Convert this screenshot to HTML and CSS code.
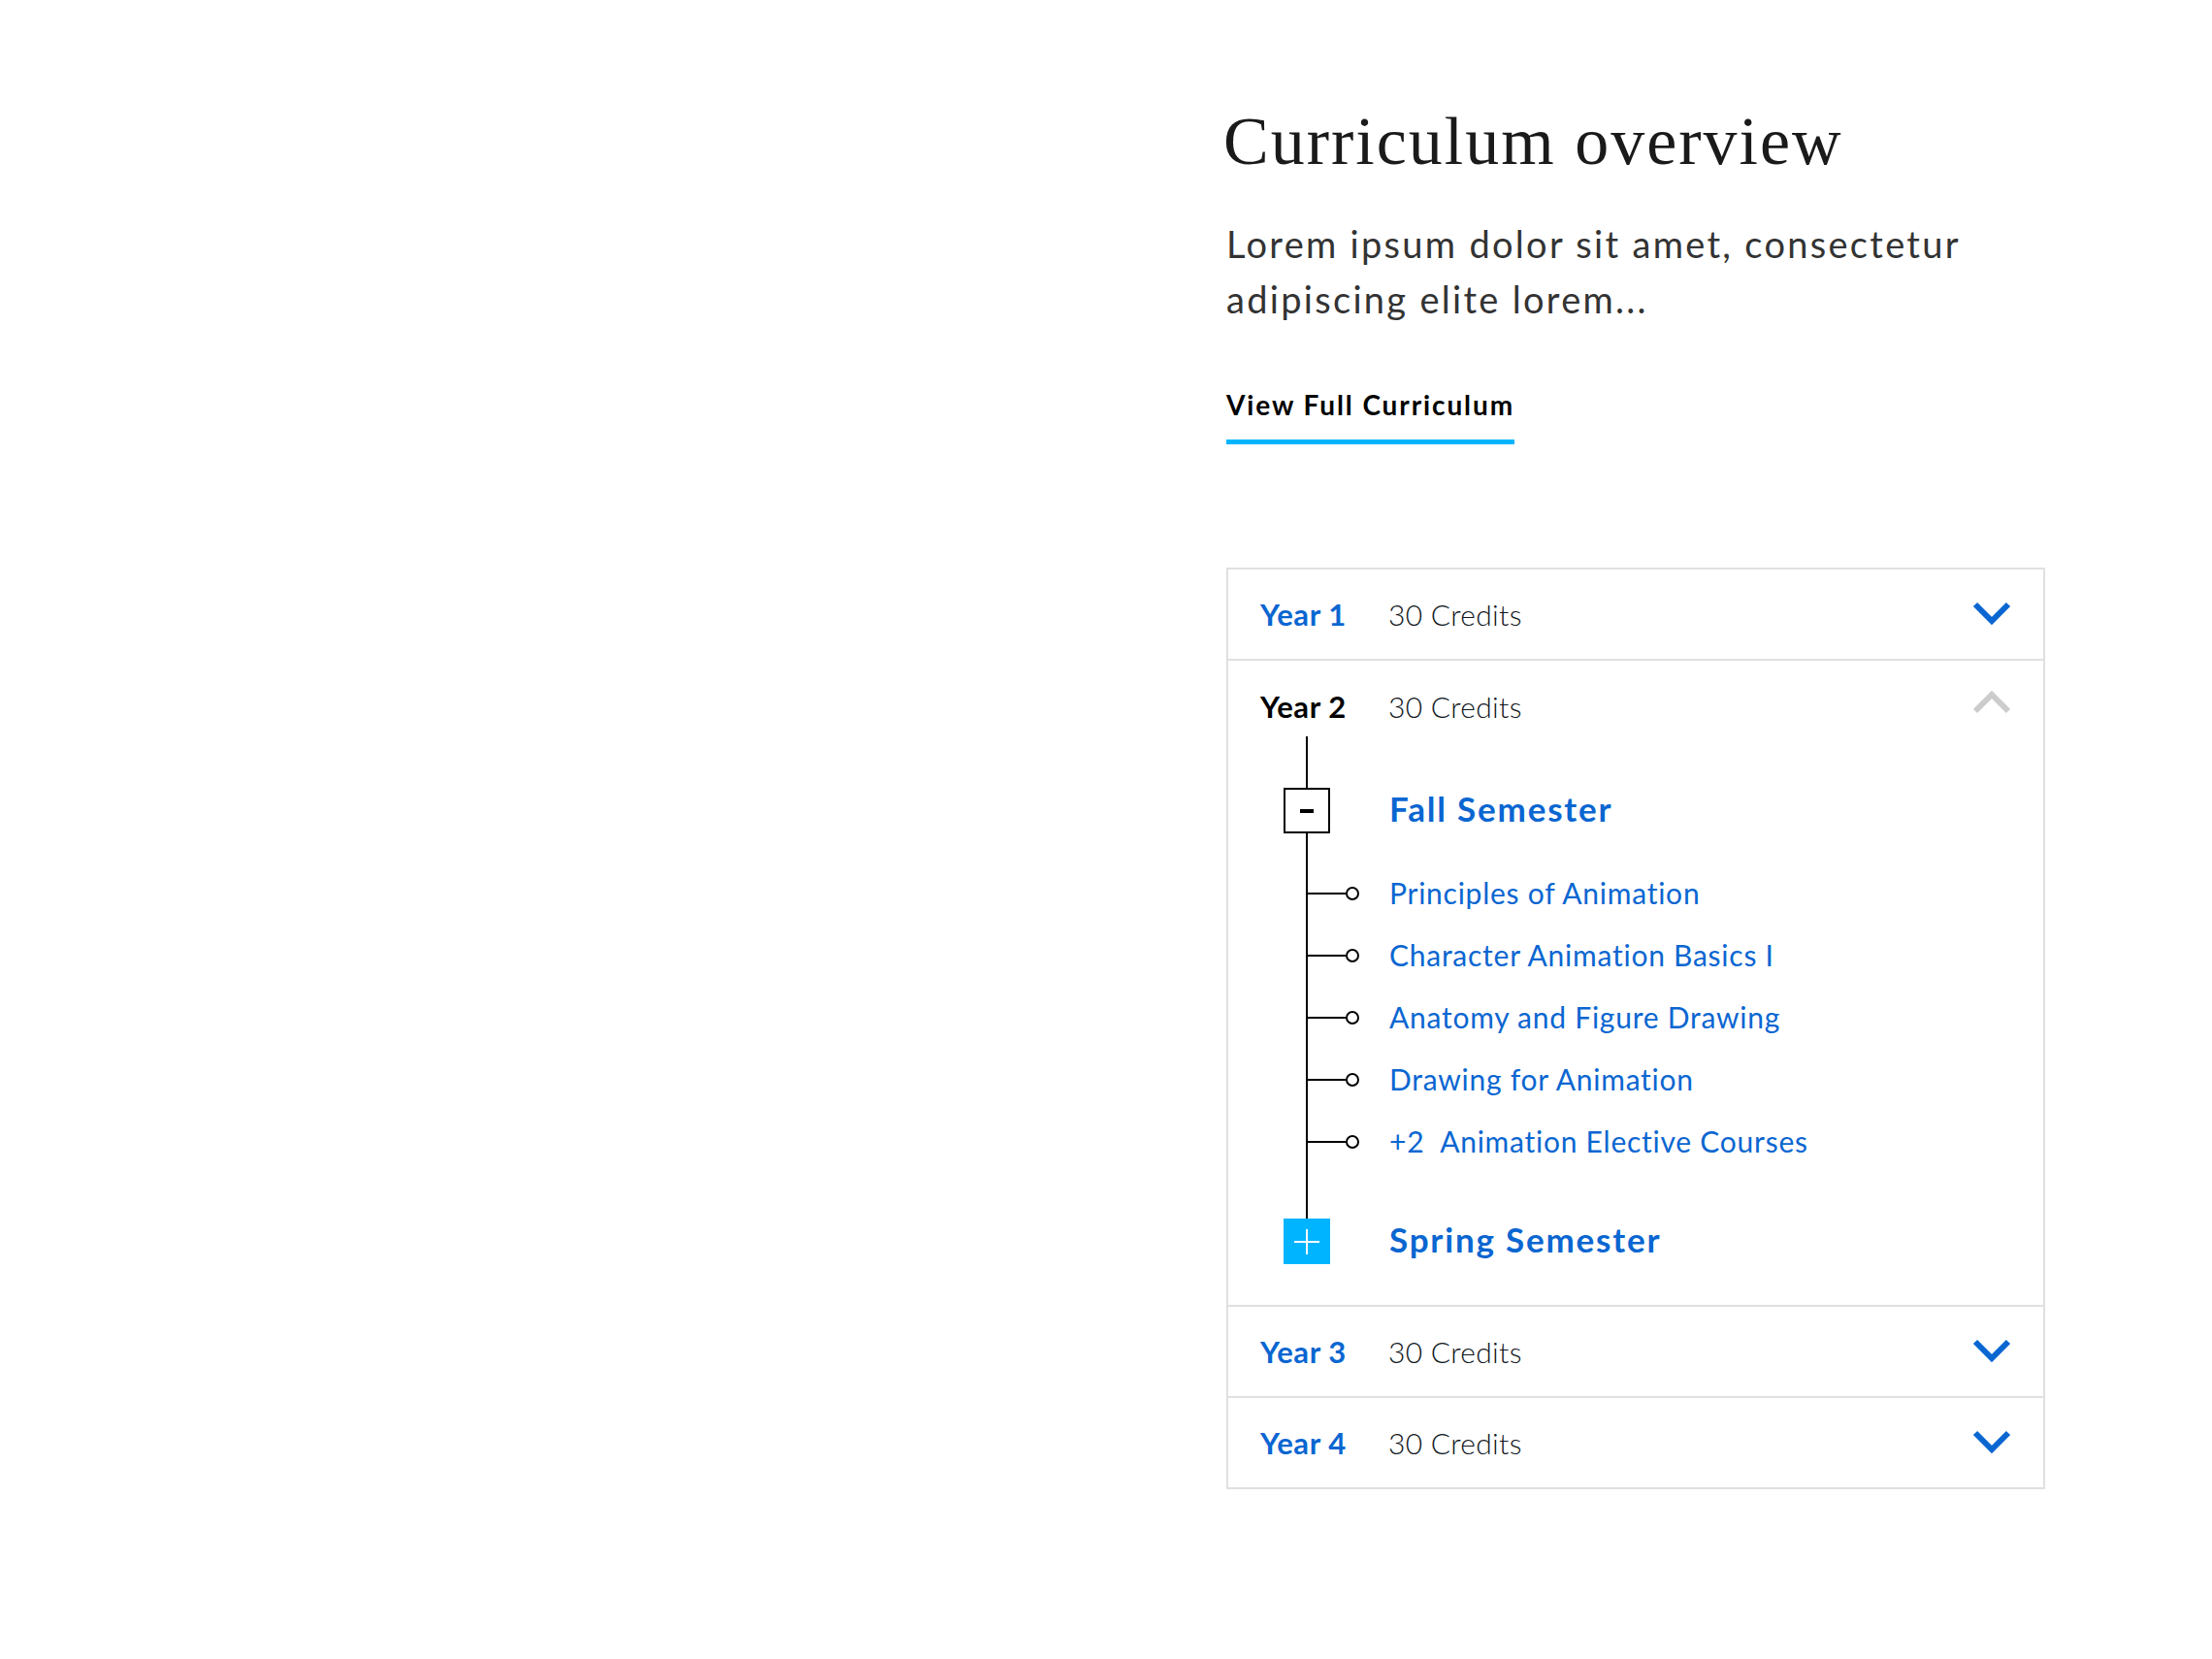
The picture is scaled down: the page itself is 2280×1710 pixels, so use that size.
FILE: index.html
```html
<!DOCTYPE html>
<html lang="en">
<head>
<meta charset="utf-8">
<title>Curriculum overview</title>
<link rel="stylesheet" href="styles.css">
</head>
<body>
<main class="overview">
  <h1 class="title">Curriculum overview</h1>
  <p class="intro">Lorem ipsum dolor sit amet, consectetur adipiscing elite lorem...</p>
  <a class="cta" href="#">View Full Curriculum</a>

  <div class="accordion">
    <div class="year">
      <div class="year-head">
        <span class="year-label">Year 1</span>
        <span class="credits">30 Credits</span>
        <svg class="chev" viewBox="0 0 40 26" width="40" height="26"><polyline points="3,3 20,20 37,3" /></svg>
      </div>
    </div>

    <div class="year open">
      <div class="year-head">
        <span class="year-label">Year 2</span>
        <span class="credits">30 Credits</span>
        <svg class="chev up" viewBox="0 0 40 26" width="40" height="26"><polyline points="3,23 20,6 37,23" /></svg>
      </div>
      <div class="tree">
        <div class="semester">
          <span class="toggle minus"><svg viewBox="0 0 14 4" width="14" height="4"><rect x="0" y="0" width="14" height="4" /></svg></span>
          <span class="sem-name">Fall Semester</span>
        </div>
        <ul class="courses">
          <li class="course"><span class="branch"><span class="stem"></span><span class="dot"></span></span><span class="course-name">Principles of Animation</span></li>
          <li class="course"><span class="branch"><span class="stem"></span><span class="dot"></span></span><span class="course-name">Character Animation Basics I</span></li>
          <li class="course"><span class="branch"><span class="stem"></span><span class="dot"></span></span><span class="course-name">Anatomy and Figure Drawing</span></li>
          <li class="course"><span class="branch"><span class="stem"></span><span class="dot"></span></span><span class="course-name">Drawing for Animation</span></li>
          <li class="course"><span class="branch"><span class="stem"></span><span class="dot"></span></span><span class="course-name">+2&nbsp; Animation Elective Courses</span></li>
        </ul>
        <div class="semester spring">
          <span class="toggle plus"><svg viewBox="0 0 26 26" width="26" height="26"><rect x="0" y="12" width="26" height="2" /><rect x="12" y="0" width="2" height="26" /></svg></span>
          <span class="sem-name">Spring Semester</span>
        </div>
      </div>
    </div>

    <div class="year">
      <div class="year-head">
        <span class="year-label">Year 3</span>
        <span class="credits">30 Credits</span>
        <svg class="chev" viewBox="0 0 40 26" width="40" height="26"><polyline points="3,3 20,20 37,3" /></svg>
      </div>
    </div>

    <div class="year">
      <div class="year-head">
        <span class="year-label">Year 4</span>
        <span class="credits">30 Credits</span>
        <svg class="chev" viewBox="0 0 40 26" width="40" height="26"><polyline points="3,3 20,20 37,3" /></svg>
      </div>
    </div>
  </div>
</main>
</body>
</html>
```

FILE: styles.css
```css
* { box-sizing: border-box; }

html, body {
  margin: 0;
  padding: 0;
  background: #ffffff;
}

body {
  font-family: Lato, "Open Sans", "Liberation Sans", sans-serif;
  color: #333333;
}

.overview {
  width: 844px;
  margin-left: 1264px;
  padding-top: 111px;
  padding-bottom: 120px;
}

.title {
  margin: 0 0 0 -3px;
  font-family: "Liberation Serif", "Times New Roman", serif;
  font-weight: 400;
  font-size: 70px;
  line-height: 70px;
  letter-spacing: 2px;
  color: #1a1a1a;
}

.intro {
  margin: 42px 0 0 0;
  font-size: 38px;
  line-height: 57px;
  letter-spacing: 2.3px;
  color: #333333;
  max-width: 820px;
}

.cta {
  display: inline-block;
  margin-top: 66px;
  font-size: 28px;
  line-height: 28px;
  font-weight: 700;
  color: #000000;
  text-decoration: none;
  padding-bottom: 22px;
  border-bottom: 5px solid #00b4ff;
  letter-spacing: 1.9px;
}

.accordion {
  margin-top: 127px;
  border: 2px solid #e0e0e0;
}

.year + .year {
  border-top: 2px solid #e0e0e0;
}

.year-head {
  display: flex;
  align-items: center;
  height: 92px;
  padding: 0 33px 0 33px;
}

.year-label {
  width: 132px;
  font-size: 31px;
  font-weight: 700;
  letter-spacing: 0.6px;
  color: #0a66d1;
}

.open .year-head {
  height: 80px;
  padding-top: 14px;
}

.open .year-label {
  color: #000000;
}

.credits {
  flex: 1;
  font-size: 30px;
  font-weight: 300;
  letter-spacing: 0.3px;
  color: #111722;
}

.chev {
  display: block;
  width: 40px;
  height: 26px;
}

.chev polyline {
  fill: none;
  stroke: #0a66d1;
  stroke-width: 6;
  stroke-linejoin: miter;
  stroke-linecap: butt;
}

.chev.up polyline {
  stroke: #cccccc;
}

.open .chev.up {
  margin-top: -10px;
}

.tree {
  position: relative;
  margin: 0 33px;
  padding-top: 51px;
  padding-bottom: 42px;
}

.tree::before {
  content: "";
  position: absolute;
  left: 47px;
  top: -2px;
  bottom: 89px;
  width: 2px;
  background: #000000;
}

.semester {
  position: relative;
  display: flex;
  align-items: center;
  height: 47px;
}

.toggle {
  display: flex;
  align-items: center;
  justify-content: center;
  width: 48px;
  height: 47px;
  margin-left: 24px;
  margin-right: 61px;
}

.toggle.minus {
  border: 2px solid #000000;
  background: #ffffff;
}

.toggle.minus rect { fill: #000000; }

.toggle.plus {
  background: #00b4ff;
}

.toggle.plus rect { fill: #ffffff; }

.sem-name {
  font-size: 35px;
  font-weight: 700;
  color: #0a66d1;
  letter-spacing: 1.8px;
  margin-top: -5px;
}

.courses {
  list-style: none;
  margin: 29px 0 48px 0;
  padding: 0;
}

.course {
  display: flex;
  align-items: center;
  height: 64px;
}

.branch {
  display: flex;
  align-items: center;
  width: 133px;
  padding-left: 48px;
  margin-top: 2px;
}

.stem {
  display: block;
  width: 40px;
  height: 2px;
  background: #000000;
}

.dot {
  display: block;
  width: 14px;
  height: 14px;
  border: 2px solid #000000;
  border-radius: 50%;
  background: #ffffff;
}

.course-name {
  font-size: 30px;
  line-height: 64px;
  color: #0a66d1;
  letter-spacing: 0.75px;
}
```
